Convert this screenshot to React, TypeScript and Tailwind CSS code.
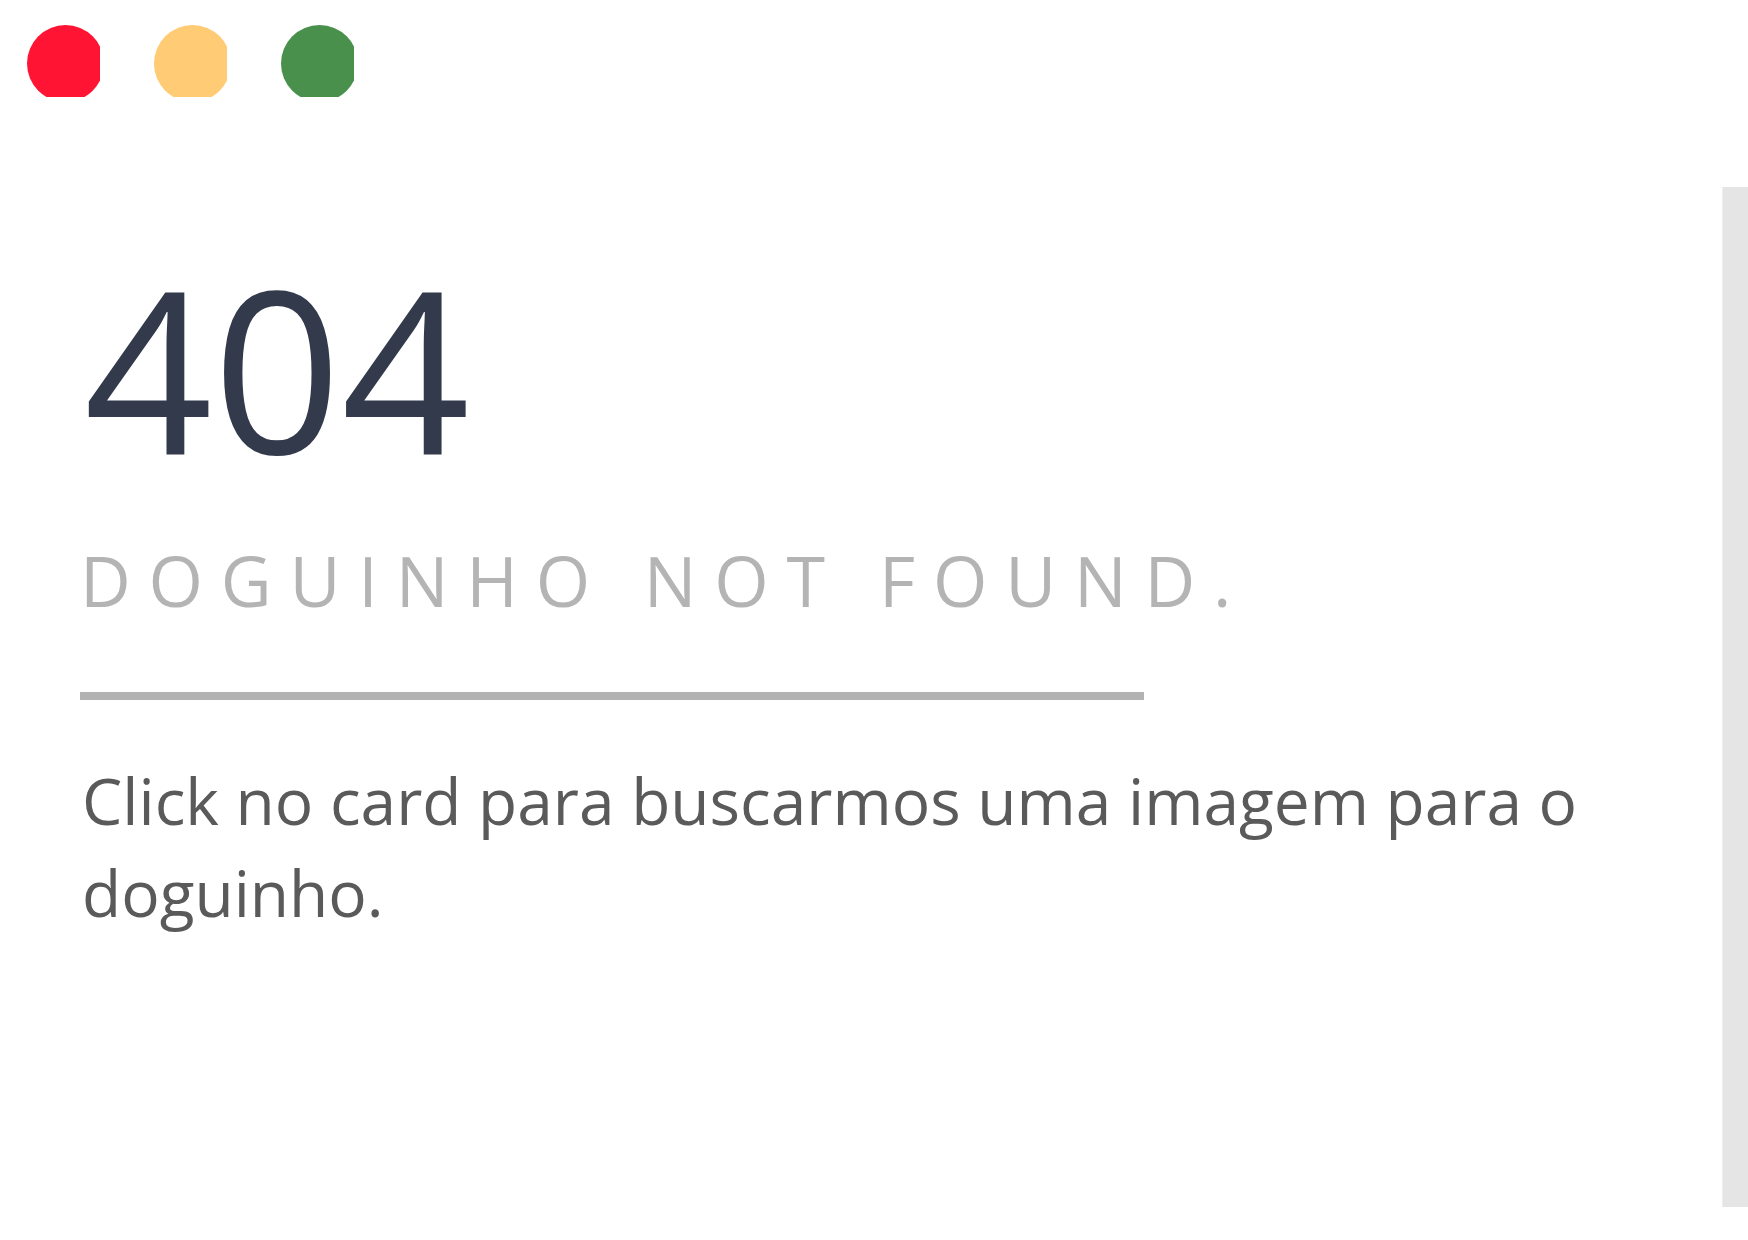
const Dot = ({ color }: { color: string }) => (
  <div className="w-[73px] h-[72px] overflow-hidden">
    <div className={`w-[77px] h-[77px] rounded-full ${color}`} />
  </div>
);

const App = () => {
  return (
    <div className="flex w-full h-[1240px] bg-white overflow-hidden">
      <div className="flex-1 flex flex-col">
        {/* window buttons */}
        <div className="flex gap-[54px] pl-[27px] pt-[25px]">
          <Dot color="bg-[#ff1533]" />
          <Dot color="bg-[#ffcb74]" />
          <Dot color="bg-[#48904b]" />
        </div>

        <div className="pl-[80px] pt-[158px]">
          <h1 className="text-[225px] leading-none text-[#323a4b] font-['Open_Sans',sans-serif] ml-[4px]">
            404
          </h1>

          <p className="mt-[65px] text-[70px] leading-none font-normal tracking-[17.8px] text-[#b4b4b4] font-['Open_Sans',sans-serif]">
            DOGUINHO NOT FOUND.
          </p>

          <div className="mt-[77px] w-[1064px] h-[8px] bg-[#b3b3b3]" />

          <p className="mt-[55px] ml-[2px] w-[1560px] text-[64px] leading-[92px] text-[#5a5a5a] font-['Open_Sans',sans-serif]">
            Click no card para buscarmos uma imagem para o doguinho.
          </p>
        </div>
      </div>

      {/* scrollbar track */}
      <div className="w-[26px] mt-[187px] h-[1020px] bg-[#e5e5e5] border-l border-[#eeeeee]" />
    </div>
  );
};

export default App;
